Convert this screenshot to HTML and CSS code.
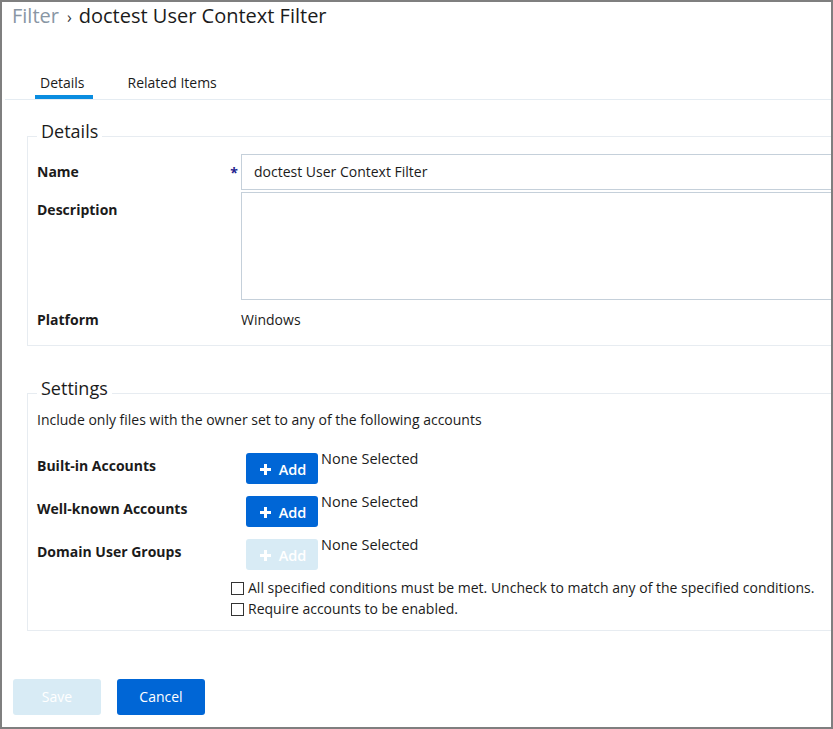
FILE: index.html
```html
<!DOCTYPE html>
<html lang="en">
<head>
<meta charset="utf-8">
<title>doctest User Context Filter</title>
<link rel="stylesheet" href="styles.css">
</head>
<body>
<div class="frame">
  <div class="page">
    <h1 class="crumbs"><span class="crumb-parent">Filter</span><span class="crumb-sep">›</span><span class="crumb-current">doctest User Context Filter</span></h1>

    <nav class="tabs">
      <a class="tab tab-active">Details</a>
      <a class="tab">Related Items</a>
    </nav>

    <fieldset class="group group-details">
      <legend class="group-title">Details</legend>
      <div class="field">
        <label class="field-label">Name<span class="required">*</span></label>
        <input class="text-input" type="text" value="doctest User Context Filter">
      </div>
      <div class="field field-desc">
        <label class="field-label">Description</label>
        <textarea class="text-area"></textarea>
      </div>
      <div class="field field-platform">
        <label class="field-label field-label-plain">Platform</label>
        <span class="field-value">Windows</span>
      </div>
    </fieldset>

    <fieldset class="group group-settings">
      <legend class="group-title">Settings</legend>
      <p class="settings-intro">Include only files with the owner set to any of the following accounts</p>
      <div class="acct">
        <span class="acct-label">Built-in Accounts</span>
        <div class="acct-ctrl">
          <button class="btn-add"><span class="plus"></span>Add</button>
          <span class="acct-value">None Selected</span>
        </div>
      </div>
      <div class="acct">
        <span class="acct-label">Well-known Accounts</span>
        <div class="acct-ctrl">
          <button class="btn-add"><span class="plus"></span>Add</button>
          <span class="acct-value">None Selected</span>
        </div>
      </div>
      <div class="acct">
        <span class="acct-label">Domain User Groups</span>
        <div class="acct-ctrl">
          <button class="btn-add btn-disabled" disabled><span class="plus"></span>Add</button>
          <span class="acct-value">None Selected</span>
        </div>
      </div>
      <div class="checks">
        <label class="check"><span class="box"></span>All specified conditions must be met. Uncheck to match any of the specified conditions.</label>
        <label class="check"><span class="box"></span>Require accounts to be enabled.</label>
      </div>
    </fieldset>

    <div class="actions">
      <button class="btn btn-disabled" disabled>Save</button>
      <button class="btn btn-primary">Cancel</button>
    </div>
  </div>
</div>
</body>
</html>
```
FILE: styles.css
```css
html, body {
  margin: 0;
  padding: 0;
  background: #fff;
}
body {
  font-family: "Open Sans", "Noto Sans", sans-serif;
  font-size: 14px;
  line-height: 20px;
  color: #1b1b1b;
}
.frame {
  width: 833px;
  height: 729px;
  box-sizing: border-box;
  border: 2px solid #7f7f7f;
  overflow: hidden;
}
.page {
  width: 1000px;
}

/* breadcrumb */
.crumbs {
  margin: 0;
  padding-left: 10px;
  font-size: 20px;
  line-height: 28px;
  font-weight: 400;
  display: flex;
  align-items: baseline;
}
.crumb-parent { color: #8996a4; }
.crumb-sep {
  color: #333;
  font-size: 16px;
  margin: 0 7px 0 8px;
}
.crumb-current { color: #1b1b1b; }

/* tabs */
.tabs {
  margin: 42px 0 0 3px;
  padding-left: 30px;
  display: flex;
  gap: 30px;
  border-bottom: 1px solid #e5ecf2;
}
.tab {
  padding: 0 5px 2px;
  border-bottom: 4px solid transparent;
  color: #1b1b1b;
  cursor: pointer;
}
.tab-active {
  border-bottom-color: #0a8de0;
  padding-right: 8px;
}

/* groups */
.group {
  margin: 0 0 0 25px;
  border: 1px solid #e7ecf1;
  padding: 0 0 15px 9px;
  min-width: 0;
}
.group-details { margin-top: 19px; }
.group-settings { margin-top: 30px; padding-bottom: 11px; }
.group-title {
  font-size: 18px;
  line-height: 24px;
  padding: 0 4px 11px;
  color: #1b1b1b;
}
.group-settings .group-title { padding-bottom: 10px; }

.field {
  display: grid;
  grid-template-columns: 204px 640px;
  align-items: start;
}
.field-desc { margin-top: 2px; }
.field-platform { margin-top: 10px; }
.field-label {
  font-weight: 700;
  padding-top: 8px;
  display: flex;
  justify-content: space-between;
  padding-right: 3px;
}
.field-label-plain { padding-top: 0; }
.required {
  color: #24248f;
  font-size: 14px;
  padding-top: 1px;
}
.text-input, .text-area {
  box-sizing: border-box;
  width: 640px;
  border: 1px solid #c5d0da;
  border-radius: 0;
  font: inherit;
  color: #1b1b1b;
  margin: 0;
  outline: none;
}
.text-input {
  height: 36px;
  padding: 0 12px 1px;
}
.text-area {
  height: 108px;
  padding: 6px 12px;
  resize: none;
  display: block;
}
.field-value { color: #1b1b1b; }

/* settings */
.settings-intro {
  margin: 0;
}
.acct {
  display: grid;
  grid-template-columns: 209px auto;
  align-items: start;
  margin-top: 12px;
}
.settings-intro + .acct { margin-top: 23px; }
.acct-label {
  font-weight: 700;
  padding-top: 3px;
}
.acct-ctrl {
  display: flex;
  align-items: flex-start;
  gap: 3px;
}
.btn-add {
  width: 72px;
  height: 31px;
  border: 0;
  border-radius: 3px;
  background: #0066d6;
  color: #fff;
  font: inherit;
  font-size: 14.5px;
  font-weight: 600;
  display: flex;
  align-items: center;
  justify-content: center;
  gap: 8px;
  padding: 2px 0 0 2px;
  cursor: pointer;
}
.plus {
  width: 11px;
  height: 11px;
  display: inline-block;
  background:
    linear-gradient(#fff, #fff) center / 11px 3px no-repeat,
    linear-gradient(#fff, #fff) center / 3px 11px no-repeat;
}
.btn-add.btn-disabled, .btn.btn-disabled {
  background: #d8ebf5;
  color: #fff;
  cursor: default;
}
.acct-value {
  font-size: 14.5px;
  line-height: 12px;
}
.checks {
  margin: 8px 0 0 194px;
  display: flex;
  flex-direction: column;
  gap: 1px;
}
.check {
  display: flex;
  align-items: center;
  gap: 4px;
}
.box {
  width: 13px;
  height: 13px;
  box-sizing: border-box;
  border: 1px solid #333;
  background: #fff;
  margin-top: 1px;
}

/* actions */
.actions {
  margin: 48px 0 0 11px;
  display: flex;
  gap: 16px;
}
.btn {
  width: 88px;
  height: 36px;
  border: 0;
  border-radius: 3px;
  font: inherit;
  color: #fff;
  cursor: pointer;
}
.btn-primary { background: #0066d6; }
```
